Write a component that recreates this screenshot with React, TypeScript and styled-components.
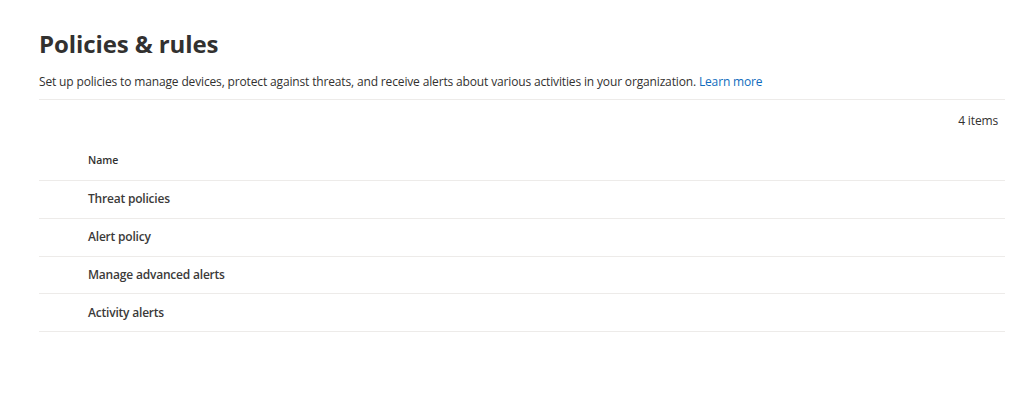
import * as React from "react"
import styled, { createGlobalStyle } from "styled-components"

const GlobalStyle = createGlobalStyle`
  body {
    margin: 0;
    background: #ffffff;
    font-family: "Open Sans", "Noto Sans", "Liberation Sans", sans-serif;
    color: #323130;
  }
`

const Page = styled.div`
  width: 966px;
  padding: 26px 0 0 39px;
`

const Title = styled.h1`
  margin: 0;
  font-size: 24px;
  line-height: 36px;
  font-weight: 700;
  letter-spacing: -0.1px;
  color: #323130;
`

const Description = styled.p`
  margin: 0;
  padding: 11px 0 8px;
  font-size: 12px;
  line-height: 18px;
  letter-spacing: -0.15px;
  color: #323130;
  border-bottom: 1px solid #edebe9;
`

const Link = styled.a`
  color: #0f6cbd;
  text-decoration: none;
`

const CommandBar = styled.div`
  display: flex;
  justify-content: flex-end;
  align-items: center;
  height: 40px;
  padding-right: 7px;
  font-size: 12px;
  letter-spacing: -0.15px;
  color: #323130;
`

const HeaderRow = styled.div`
  display: flex;
  align-items: center;
  height: 40px;
  padding-left: 49px;
  border-bottom: 1px solid #edebe9;
  font-size: 10.5px;
  font-weight: 600;
`

const Row = styled.div`
  display: flex;
  align-items: center;
  height: 36.75px;
  padding-left: 49px;
  padding-bottom: 1px;
  box-sizing: border-box;
  min-height: 37.75px;
  border-bottom: 1px solid #edebe9;
  font-size: 12px;
  font-weight: 600;
  letter-spacing: -0.2px;
  color: #3b3a39;
`

const policies = [
  "Threat policies",
  "Alert policy",
  "Manage advanced alerts",
  "Activity alerts",
]

const App = () => (
  <>
    <GlobalStyle />
    <Page>
      <Title>Policies &amp; rules</Title>
      <Description>
        Set up policies to manage devices, protect against threats, and receive
        alerts about various activities in your organization.{" "}
        <Link href="#">Learn more</Link>
      </Description>
      <CommandBar>{policies.length} items</CommandBar>
      <HeaderRow>Name</HeaderRow>
      {policies.map((name) => (
        <Row key={name}>{name}</Row>
      ))}
    </Page>
  </>
)

export default App
